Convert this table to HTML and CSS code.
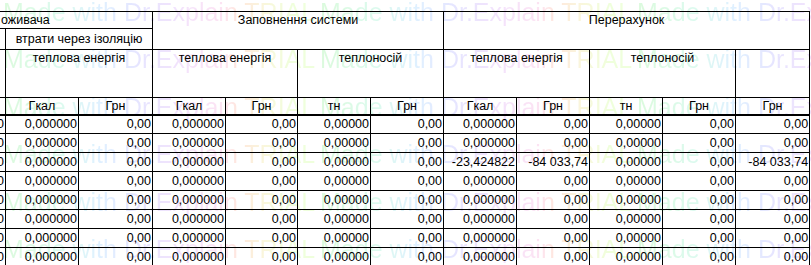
FILE: index.html
```html
<!DOCTYPE html>
<html lang="uk">
<head>
<meta charset="utf-8">
<title>Розрахунок</title>
<link rel="stylesheet" href="styles.css">
</head>
<body>
<div class="watermark" aria-hidden="true">
  <div class="wm-line"><span>Made with Dr.Explain TRIAL</span><span>Made with Dr.Explain TRIAL</span><span>Made with Dr.Explain TRIAL</span></div>
  <div class="wm-line"><span>Made with Dr.Explain TRIAL</span><span>Made with Dr.Explain TRIAL</span><span>Made with Dr.Explain TRIAL</span></div>
  <div class="wm-line"><span>Made with Dr.Explain TRIAL</span><span>Made with Dr.Explain TRIAL</span><span>Made with Dr.Explain TRIAL</span></div>
  <div class="wm-line"><span>Made with Dr.Explain TRIAL</span><span>Made with Dr.Explain TRIAL</span><span>Made with Dr.Explain TRIAL</span></div>
  <div class="wm-line"><span>Made with Dr.Explain TRIAL</span><span>Made with Dr.Explain TRIAL</span><span>Made with Dr.Explain TRIAL</span></div>
  <div class="wm-line"><span>Made with Dr.Explain TRIAL</span><span>Made with Dr.Explain TRIAL</span><span>Made with Dr.Explain TRIAL</span></div>
  <div class="wm-line"><span>Made with Dr.Explain TRIAL</span><span>Made with Dr.Explain TRIAL</span><span>Made with Dr.Explain TRIAL</span></div>
</div>
<table class="grid">
  <colgroup>
    <col class="c73"><col class="c73"><col class="c74"><col class="c73"><col class="c72"><col class="c73"><col class="c73"><col class="c73"><col class="c73"><col class="c73"><col class="c73"><col class="c74">
  </colgroup>
  <thead>
    <tr class="h1">
      <th colspan="3" class="cut-title">оживача</th>
      <th colspan="4" rowspan="2" class="top">Заповнення системи</th>
      <th colspan="5" rowspan="2" class="top">Перерахунок</th>
    </tr>
    <tr class="h2">
      <th></th>
      <th colspan="2">втрати через ізоляцію</th>
    </tr>
    <tr class="h3">
      <th></th>
      <th colspan="2" class="top">теплова енергія</th>
      <th colspan="2" class="top">теплова енергія</th>
      <th colspan="2" class="top">теплоносій</th>
      <th colspan="2" class="top">теплова енергія</th>
      <th colspan="2" class="top">теплоносій</th>
      <th></th>
    </tr>
    <tr class="h4">
      <th>Грн</th>
      <th>Гкал</th><th>Грн</th>
      <th>Гкал</th><th>Грн</th>
      <th>тн</th><th>Грн</th>
      <th>Гкал</th><th>Грн</th>
      <th>тн</th><th>Грн</th>
      <th>Грн</th>
    </tr>
  </thead>
  <tbody>
    <tr><td>0,00</td><td>0,000000</td><td>0,00</td><td>0,000000</td><td>0,00</td><td>0,00000</td><td>0,00</td><td>0,000000</td><td>0,00</td><td>0,00000</td><td>0,00</td><td>0,00</td></tr>
    <tr><td>0,00</td><td>0,000000</td><td>0,00</td><td>0,000000</td><td>0,00</td><td>0,00000</td><td>0,00</td><td>0,000000</td><td>0,00</td><td>0,00000</td><td>0,00</td><td>0,00</td></tr>
    <tr><td>0,00</td><td>0,000000</td><td>0,00</td><td>0,000000</td><td>0,00</td><td>0,00000</td><td>0,00</td><td>-23,424822</td><td>-84 033,74</td><td>0,00000</td><td>0,00</td><td>-84 033,74</td></tr>
    <tr><td>0,00</td><td>0,000000</td><td>0,00</td><td>0,000000</td><td>0,00</td><td>0,00000</td><td>0,00</td><td>0,000000</td><td>0,00</td><td>0,00000</td><td>0,00</td><td>0,00</td></tr>
    <tr><td>0,00</td><td>0,000000</td><td>0,00</td><td>0,000000</td><td>0,00</td><td>0,00000</td><td>0,00</td><td>0,000000</td><td>0,00</td><td>0,00000</td><td>0,00</td><td>0,00</td></tr>
    <tr><td>0,00</td><td>0,000000</td><td>0,00</td><td>0,000000</td><td>0,00</td><td>0,00000</td><td>0,00</td><td>0,000000</td><td>0,00</td><td>0,00000</td><td>0,00</td><td>0,00</td></tr>
    <tr><td>0,00</td><td>0,000000</td><td>0,00</td><td>0,000000</td><td>0,00</td><td>0,00000</td><td>0,00</td><td>0,000000</td><td>0,00</td><td>0,00000</td><td>0,00</td><td>0,00</td></tr>
    <tr><td>0,00</td><td>0,000000</td><td>0,00</td><td>0,000000</td><td>0,00</td><td>0,00000</td><td>0,00</td><td>0,000000</td><td>0,00</td><td>0,00000</td><td>0,00</td><td>0,00</td></tr>
  </tbody>
</table>
</body>
</html>
```

FILE: styles.css
```css
html, body {
  margin: 0;
  padding: 0;
  overflow: hidden;
  background: #ffffff;
}
body {
  position: relative;
  width: 811px;
  height: 265px;
  font-family: "Liberation Sans", Arial, sans-serif;
  font-size: 12.5px;
  color: #000;
}
.watermark {
  position: absolute;
  top: -11.5px;
  left: 3px;
  z-index: 0;
  display: flex;
  flex-direction: column;
  font-family: "Liberation Sans", Arial, sans-serif;
  font-size: 25px;
  line-height: 47.5px;
  white-space: nowrap;
  opacity: 0.62;
}
.wm-line {
  display: flex;
}
.wm-line span {
  display: inline-block;
  width: 317px;
  flex: none;
  color: transparent;
  background-image: linear-gradient(to right,
    #c6f7c8 0px,
    #c8f7e6 60px,
    #cde9ff 95px,
    #d7d6ff 135px,
    #ecd2fb 178px,
    #fbd3ec 218px,
    #ffdac8 236px,
    #f6f2c6 262px,
    #e6ffc8 290px,
    #e6ffc8 317px);
  -webkit-background-clip: text;
  background-clip: text;
}
.grid {
  position: relative;
  z-index: 1;
  margin: 11px 0 0 -68px;
  border-collapse: collapse;
  table-layout: fixed;
  width: 877px;
  background: transparent;
}
.c72 { width: 72px; }
.c73 { width: 73px; }
.c74 { width: 74px; }
.grid th,
.grid td {
  border: 1px solid #000;
  padding: 0 1px;
  line-height: 14px;
  font-weight: normal;
  white-space: nowrap;
  overflow: hidden;
}
.grid th {
  text-align: center;
  vertical-align: middle;
}
.grid th.top {
  vertical-align: top;
  padding-top: 1px;
}
.grid th.cut-title {
  text-align: left;
  padding-left: 68px;
}
.grid td {
  text-align: right;
  vertical-align: middle;
}
.h1 { height: 17px; }
.h2 { height: 21px; }
.h3 { height: 48px; }
.h4 { height: 17px; }
.h4 th { border-bottom: 2px solid #000; }
.grid tbody tr { height: 19px; }
```
